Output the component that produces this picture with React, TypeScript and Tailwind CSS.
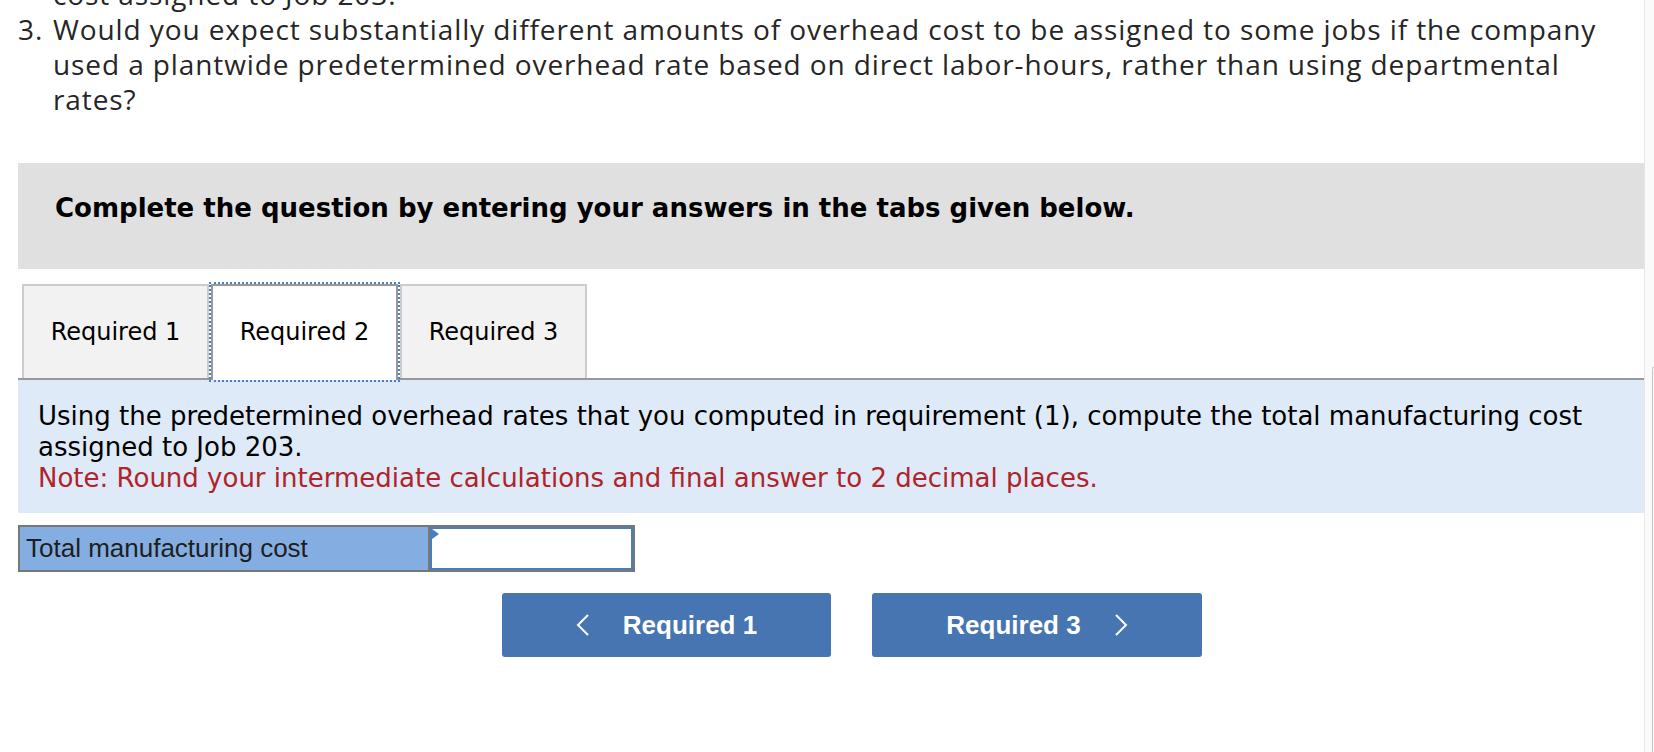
import React from 'react'

const question = [
  'cost assigned to Job 203.',
  'Would you expect substantially different amounts of overhead cost to be assigned to some jobs if the company',
  'used a plantwide predetermined overhead rate based on direct labor-hours, rather than using departmental',
  'rates?',
]

function Chevron({ dir }: { dir: 'left' | 'right' }) {
  return (
    <svg width="14" height="22" viewBox="0 0 14 22" fill="none" stroke="white" strokeWidth="2">
      {dir === 'left' ? <polyline points="12,1 2,11 12,21" /> : <polyline points="2,1 12,11 2,21" />}
    </svg>
  )
}

export default function App() {
  return (
    <div className="flex w-[1654px] h-[752px] overflow-hidden bg-white">
      <div className="w-[18px] shrink-0" />
      <div className="w-[1626px] shrink-0">
        {/* Question text */}
        <div className="-mt-[23px] flex text-[28px] leading-[35px] tracking-[0.9px] text-[#262626] font-['Open_Sans',Arial,sans-serif]">
          <div className="w-[35px] shrink-0">
            <div>&nbsp;</div>
            <div>3.</div>
          </div>
          <div className="whitespace-nowrap">
            {question.map((line) => (
              <div key={line}>{line}</div>
            ))}
          </div>
        </div>

        {/* Instruction box */}
        <div className="mt-[46px] h-[106px] bg-[#e0e0e0] pt-[30px] pl-[37px] font-['DejaVu_Sans',Verdana,sans-serif] text-[26px] leading-[30px] font-bold text-black whitespace-nowrap">
          Complete the question by entering your answers in the tabs given below.
        </div>

        {/* Tabs */}
        <div className="mt-[15px] flex items-end pl-[4px] border-b-2 border-[#999] font-['DejaVu_Sans',Verdana,sans-serif] text-[24px] text-black">
          <div className="w-[187px] h-[94px] flex items-center justify-center bg-[#f2f2f2] border-2 border-b-0 border-[#cccccc]">
            Required 1
          </div>
          <div className="mx-[2px] -mb-[2px] w-[187px] h-[96px] flex items-center justify-center pb-[2px] bg-white border-2 border-b-0 border-[#999] outline-2 outline-dotted outline-[#4a7fc4]">
            Required 2
          </div>
          <div className="w-[187px] h-[94px] flex items-center justify-center bg-[#f2f2f2] border-2 border-b-0 border-[#cccccc]">
            Required 3
          </div>
        </div>

        {/* Instructions */}
        <div className="h-[133px] bg-[#deeaf7] pt-[21px] pl-[20px] font-['DejaVu_Sans',Verdana,sans-serif] text-[26px] leading-[31px] whitespace-nowrap">
          <div className="text-black">
            Using the predetermined overhead rates that you computed in requirement (1), compute the total manufacturing cost
          </div>
          <div className="text-black">assigned to Job 203.</div>
          <div className="text-[#b0232a]">Note: Round your intermediate calculations and final answer to 2 decimal places.</div>
        </div>

        {/* Answer table */}
        <div className="mt-[12px] flex w-[617px] h-[47px] border-2 border-[#777] font-['Liberation_Sans',Arial,sans-serif]">
          <div className="w-[410px] flex items-center pl-[6px] bg-[#84aee1] border-r-2 border-[#777] text-[26px] text-[#1e1e1e]">
            Total manufacturing cost
          </div>
          <div className="relative flex-1 bg-white border-2 border-[#4a7ebb]">
            <div className="absolute left-0 top-0 w-0 h-0 border-y-[5px] border-y-transparent border-l-[7px] border-l-[#4a7ebb]" />
          </div>
        </div>

        {/* Navigation */}
        <div className="mt-[21px] flex gap-[41px] pl-[484px] font-['Liberation_Sans',Arial,sans-serif] text-[26px] font-bold text-white">
          <button className="w-[329px] h-[64px] flex items-center justify-center gap-[33px] rounded-[3px] bg-[#4775b2]">
            <Chevron dir="left" />
            <span>Required 1</span>
          </button>
          <button className="w-[330px] h-[64px] flex items-center justify-center gap-[33px] rounded-[3px] bg-[#4775b2]">
            <span>Required 3</span>
            <Chevron dir="right" />
          </button>
        </div>
      </div>

      {/* Scrollbar track */}
      <div className="w-[10px] shrink-0 bg-[#fafafa] border-l border-[#e6e6e6] flex flex-col">
        <div className="h-[367px]" />
        <div className="flex-1 ml-[7px] border-l border-t border-[#c4c4c4] rounded-tl-[3px]" />
      </div>
    </div>
  )
}
